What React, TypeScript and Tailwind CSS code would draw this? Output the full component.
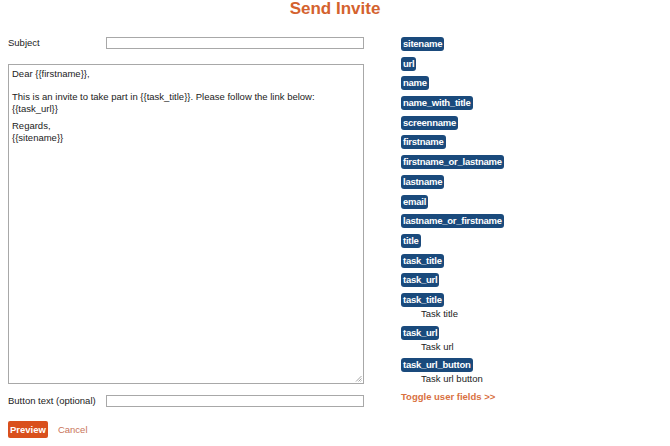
import React from "react";

const fields: { name: string; desc?: string }[] = [
  { name: "sitename" },
  { name: "url" },
  { name: "name" },
  { name: "name_with_title" },
  { name: "screenname" },
  { name: "firstname" },
  { name: "firstname_or_lastname" },
  { name: "lastname" },
  { name: "email" },
  { name: "lastname_or_firstname" },
  { name: "title" },
  { name: "task_title" },
  { name: "task_url" },
  { name: "task_title", desc: "Task title" },
  { name: "task_url", desc: "Task url" },
  { name: "task_url_button", desc: "Task url button" },
];

export default function App() {
  return (
    <div className="h-[446px] w-[670px] bg-white font-['Liberation_Sans',Arial,sans-serif] text-[9.5px] text-[#222]">
      <h1 className="pt-px text-center text-[17px] font-bold leading-[16px] text-[#d4622e]">
        Send Invite
      </h1>

      <div className="mt-[20px] flex">
        {/* form column */}
        <div className="ml-[8px] w-[356px]">
          <div className="flex h-[12px] items-center leading-[12px]">
            <span className="w-[98px]">Subject</span>
            <div className="h-[12px] flex-1 border border-[#a8a8a8] bg-white" />
          </div>

          <div className="relative mt-[15px] h-[320px] border border-[#a8a8a8] px-[3px] pt-[3px] text-[9.5px] leading-[12px]">
            <p>Dear {"{{firstname}}"},</p>
            <p className="mt-[11px]">
              This is an invite to take part in {"{{task_title}}"}. Please follow the link below:
            </p>
            <p>{"{{task_url}}"}</p>
            <p className="mt-[5px]">Regards,</p>
            <p>{"{{sitename}}"}</p>
            <svg className="absolute bottom-px right-px" width="7" height="7" viewBox="0 0 7 7">
              <path d="M6.5 1 L1 6.5 M6.5 3.5 L3.5 6.5 M6.5 5.5 L5.5 6.5" stroke="#9a9a9a" strokeWidth="0.9" />
            </svg>
          </div>

          <div className="mt-[11px] flex h-[12px] items-center leading-[12px]">
            <span className="w-[98px]">Button text (optional)</span>
            <div className="h-[12px] flex-1 border border-[#a8a8a8] bg-white" />
          </div>

          <div className="mt-[14px] flex items-center gap-[10px]">
            <button className="h-[17px] rounded-[2px] bg-[#d9501d] px-[2px] text-[9.5px] font-bold leading-[17px] text-white">
              Preview
            </button>
            <a className="leading-[12px] text-[#c9745a]">Cancel</a>
          </div>
        </div>

        {/* placeholder column */}
        <div className="ml-[37px] flex flex-col items-start">
          {fields.map((f, i) => (
            <div key={i} className="mb-[5.7px] flex flex-col items-start">
              <span className="h-[14px] rounded-[3px] bg-[#1a4a7c] px-[2px] text-[9.5px] font-bold leading-[14px] tracking-[-0.25px] text-white">
                {f.name}
              </span>
              {f.desc && <span className="ml-[20px] mt-px leading-[12px]">{f.desc}</span>}
            </div>
          ))}
          <a className="text-[9.5px] font-bold leading-[12px] text-[#d9713f]">Toggle user fields &gt;&gt;</a>
        </div>
      </div>
    </div>
  );
}
